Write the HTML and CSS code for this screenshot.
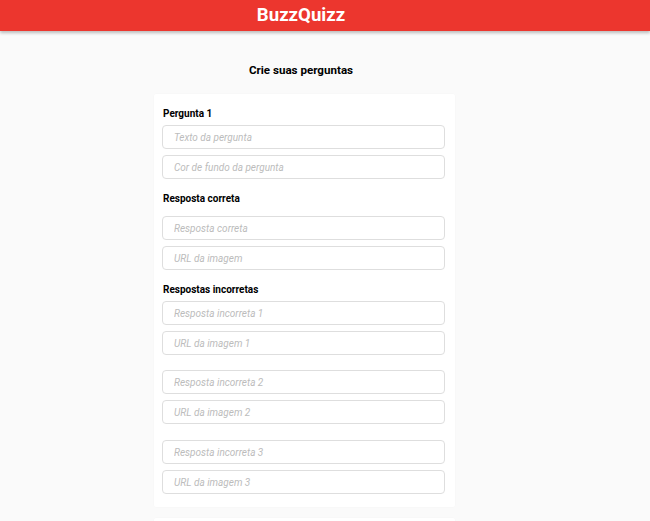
FILE: index.html
```html
<!DOCTYPE html>
<html lang="pt-BR">
<head>
<meta charset="utf-8">
<title>BuzzQuizz</title>
<link rel="stylesheet" href="styles.css">
</head>
<body>
<header class="topbar"><h1 class="brand">BuzzQuizz</h1></header>
<main class="page">
  <h2 class="page-title">Crie suas perguntas</h2>
  <section class="card">
    <h3 class="label label-first">Pergunta 1</h3>
    <div class="group">
      <input class="field" type="text" placeholder="Texto da pergunta">
      <input class="field" type="text" placeholder="Cor de fundo da pergunta">
    </div>
    <h3 class="label label-correct">Resposta correta</h3>
    <div class="group">
      <input class="field" type="text" placeholder="Resposta correta">
      <input class="field" type="text" placeholder="URL da imagem">
    </div>
    <h3 class="label label-wrong">Respostas incorretas</h3>
    <div class="group">
      <input class="field" type="text" placeholder="Resposta incorreta 1">
      <input class="field" type="text" placeholder="URL da imagem 1">
    </div>
    <div class="group group-spaced">
      <input class="field" type="text" placeholder="Resposta incorreta 2">
      <input class="field" type="text" placeholder="URL da imagem 2">
    </div>
    <div class="group group-spaced group-last">
      <input class="field" type="text" placeholder="Resposta incorreta 3">
      <input class="field" type="text" placeholder="URL da imagem 3">
    </div>
  </section>
  <section class="card card-next"></section>
</main>
</body>
</html>
```

FILE: styles.css
```css
* { box-sizing: border-box; }
html, body { margin: 0; padding: 0; }
body {
  background: #fafafa;
  font-family: Roboto, "Liberation Sans", sans-serif;
  color: #000;
  overflow: hidden;
}
.topbar {
  height: 31px;
  background: #ec362e;
  box-shadow: 0 2px 3px rgba(0,0,0,0.25);
  display: flex;
  justify-content: center;
  align-items: center;
  padding-right: 48px;
}
.brand {
  margin: 0;
  color: #fff;
  font-size: 18.6px;
  font-weight: 700;
  line-height: 31px;
}
.page {
  width: 301px;
  margin-left: 154px;
  padding-top: 26px;
}
.page-title {
  margin: 0 0 11px;
  font-size: 11.6px;
  font-weight: 700;
  line-height: 26px;
  text-align: center;
  padding-right: 7px;
}
.card {
  background: #fff;
  border-radius: 2px;
  padding: 13px 10px 13px 8px;
  box-shadow: 0 0 2px rgba(0,0,0,0.03);
}
.label {
  margin: 0;
  font-size: 10px;
  font-weight: 700;
  line-height: 14px;
  padding-left: 1px;
}
.label-first { margin-bottom: 4px; }
.label-correct { margin-top: 13px; margin-bottom: 10px; }
.label-wrong { margin-top: 13px; margin-bottom: 4px; }
.group {
  display: flex;
  flex-direction: column;
  gap: 6px;
}
.group-spaced { margin-top: 15px; }
.group-last { margin-top: 16px; }
.field {
  height: 24px;
  width: 100%;
  border: 1px solid #dedede;
  border-radius: 4px;
  padding: 0 11px;
  font-family: Roboto, "Liberation Sans", sans-serif;
  font-size: 10px;
  font-style: italic;
  background: #fff;
  outline: none;
}
.field::placeholder { color: #bcbcbc; }
.card-next {
  margin-top: 11px;
  height: 40px;
}
```
